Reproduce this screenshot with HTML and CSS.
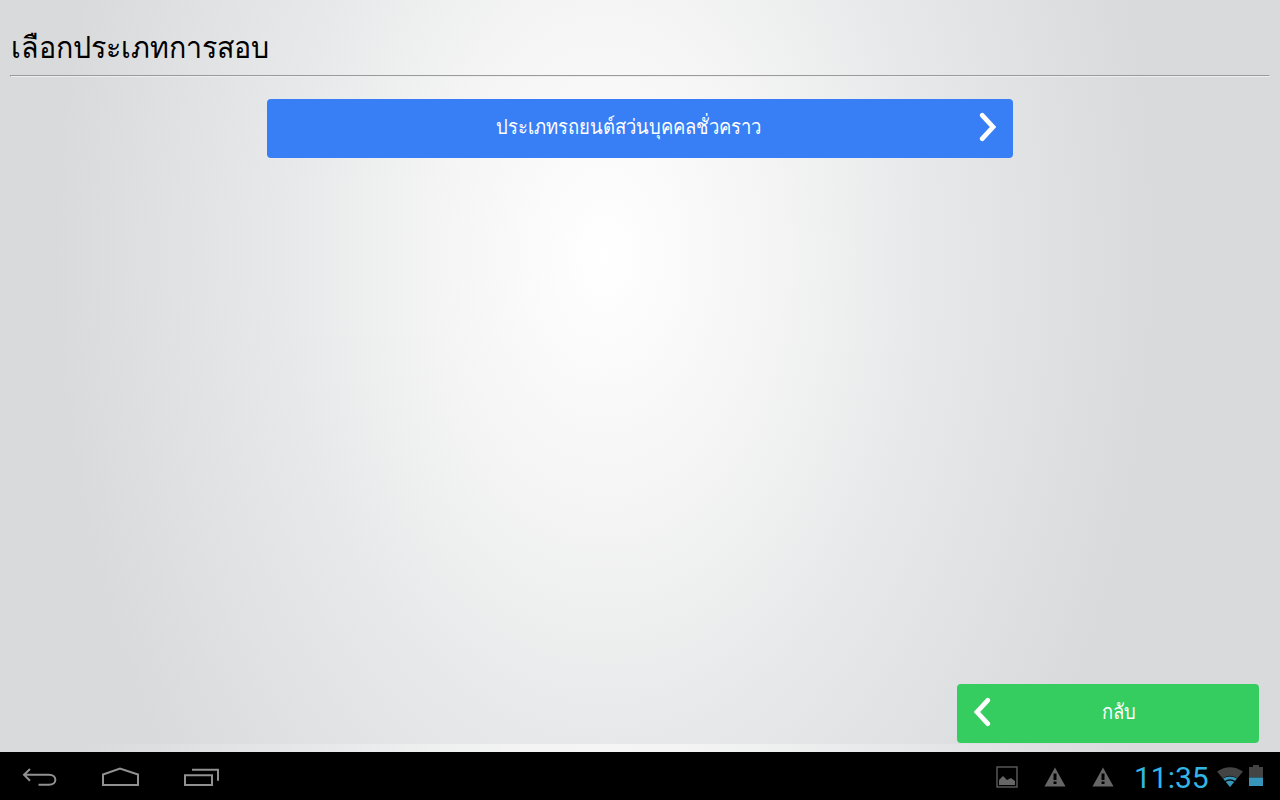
FILE: index.html
```
<!DOCTYPE html>
<html lang="th">
<head>
<meta charset="utf-8">
<title>เลือกประเภทการสอบ</title>
<link rel="stylesheet" href="styles.css">
</head>
<body>
<main class="page">
  <h1 class="title">เลือกประเภทการสอบ</h1>
  <hr class="rule">
  <button class="btn btn-blue">
    <span class="label">ประเภทรถยนต์สว่นบุคคลชั่วคราว</span>
    <svg class="chevron" width="18" height="30" viewBox="0 0 18 30"><path d="M3.300 3.300 L14 15 L3.300 26.700"/></svg>
  </button>
  <button class="btn btn-green">
    <svg class="chevron" width="18" height="30" viewBox="0 0 18 30"><path d="M14.700 3.300 L4 15 L14.700 26.700"/></svg>
    <span class="label">กลับ</span>
  </button>
</main>
<footer class="system-bar">
  <nav class="nav-keys">
    <svg width="36" height="20" viewBox="0 0 36 20"><path d="M3 7.800H28C36.500 7.800 36.500 17.800 28 17.800H17.500M9 2L3 7.800L9 13.800"/></svg>
    <svg width="38" height="20" viewBox="0 0 38 20"><path d="M2 18V7.500L19 1.500L37 7.500V18Z"/></svg>
    <svg width="36" height="20" viewBox="0 0 36 20"><path d="M2 8.300H29V18H2ZM9 2.800H35V13.800"/></svg>
  </nav>
  <div class="status">
    <svg class="notice" width="22" height="22" viewBox="0 0 22 22"><rect x="1" y="1" width="20" height="20" fill="none" stroke="#5c5c5c" stroke-width="1.400"/><path d="M3 19V14L7 10L11 14L15 12L19 15V19Z"/></svg>
    <svg class="notice" width="22" height="20" viewBox="0 0 22 20"><path fill-rule="evenodd" d="M11 .5L21.500 19.500H.5ZM9.500 6.500V13H12.500V6.500ZM9.500 14.500V17H12.500V14.500Z"/></svg>
    <svg class="notice" width="22" height="20" viewBox="0 0 22 20"><path fill-rule="evenodd" d="M11 .5L21.500 19.500H.5ZM9.500 6.500V13H12.500V6.500ZM9.500 14.500V17H12.500V14.500Z"/></svg>
    <time class="clock">11:35</time>
    <svg class="wifi" width="26" height="20" viewBox="0 0 26 20"><path fill="#444" d="M0 4.500Q13-4 26 4.500L13 20Z"/><path fill="#000" d="M5.700 11.200Q13 6.200 20.300 11.200L13 20Z"/><path fill="#3695b9" d="M6 11.500Q13 7.500 20 11.500L13 20Z"/><path fill="none" stroke="#000" stroke-width="1.200" d="M8 14.500Q13 11.200 18 14.500"/></svg>
    <svg class="battery" width="14" height="21" viewBox="0 0 14 21"><path fill="#444" d="M0 2H4V0H10V2H14V12.500H0Z"/><path fill="#3695b9" d="M0 12.500H14V21H0Z"/></svg>
  </div>
</footer>
</body>
</html>
```
FILE: styles.css
```
* { box-sizing: border-box; }

body {
  margin: 0;
  width: 1280px;
  height: 800px;
  overflow: hidden;
  display: flex;
  flex-direction: column;
  font-family: Roboto, sans-serif;
}

.page {
  height: 752px;
  padding: 27px 10px 9px;
  display: flex;
  flex-direction: column;
  background: radial-gradient(ellipse 550px 840px at 605px 255px, #fff 0%, #f3f4f3 32%, #e8e9ea 57%, #d9dadc 100%) 0 0 / 1280px 744px;
}

.title {
  margin: 0;
  height: 40px;
  padding-left: 1px;
  font-size: 28.6px;
  line-height: 41px;
  font-weight: 400;
  color: #000;
  transform: scaleY(1.06);
}

.rule {
  width: 100%;
  height: 2px;
  margin: 8px 0 22px;
  border: 1px solid;
  border-color: #9a9a9a #eee #eee #9a9a9a;
}

.btn {
  display: flex;
  align-items: center;
  height: 59px;
  padding: 0 16px 3px;
  border: 0;
  border-radius: 4px;
  color: #fff;
  font-family: Roboto, sans-serif;
  font-size: 18.45px;
}

.btn-blue {
  width: 746px;
  align-self: center;
  background: #387ff5;
}

.btn-green {
  width: 302px;
  margin: auto 11px 0 0;
  align-self: flex-end;
  background: #35cd60;
}

.label {
  flex: 1;
  padding-bottom: 1px;
  text-align: center;
  transform: scaleY(1.12);
}

.btn-blue .label { padding-right: 6px; }
.btn-green .label { padding-left: 4px; }

.chevron path {
  fill: none;
  stroke: #fff;
  stroke-width: 4.8;
  stroke-linecap: round;
}

.system-bar {
  height: 48px;
  padding: 2px 17px 0 21px;
  display: flex;
  align-items: center;
  justify-content: space-between;
  background: #000;
}

.nav-keys {
  display: flex;
  gap: 44px;
}

.nav-keys path {
  fill: none;
  stroke: #919191;
  stroke-width: 2;
}

.status {
  display: flex;
  align-items: center;
}

.notice {
  margin-right: 26px;
  fill: #666;
}

.notice + .clock { margin-left: -6px; }

.clock {
  width: 76px;
  margin-right: 7px;
  padding-top: 1px;
  color: #33b5e5;
  font-size: 30px;
  line-height: 46px;
  white-space: nowrap;
}

.wifi { margin: 0 6px 1px 0; }
.battery { margin-bottom: 3px; }
```
